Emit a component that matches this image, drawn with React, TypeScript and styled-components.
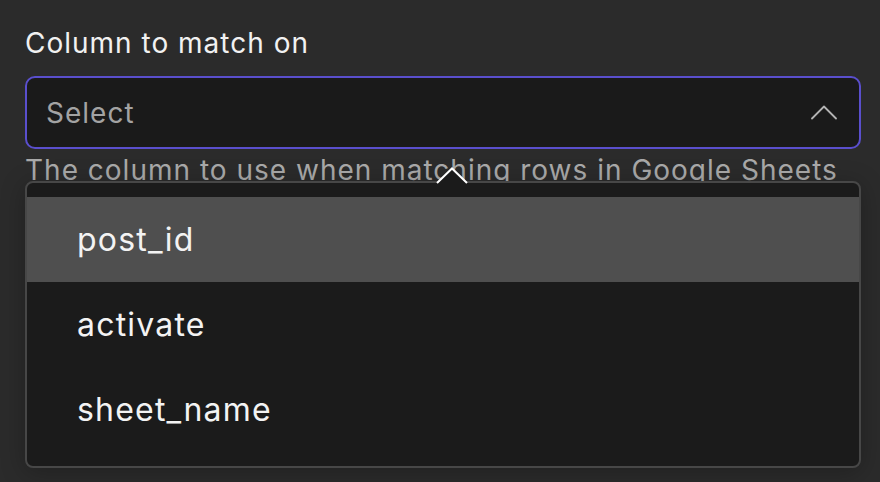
import React from "react";
import styled, { createGlobalStyle } from "styled-components";

const Global = createGlobalStyle`
  html, body {
    margin: 0;
    padding: 0;
    background: #2b2b2b;
    font-family: Inter, "Noto Sans", sans-serif;
    -webkit-font-smoothing: antialiased;
  }
`;

const Page = styled.div`
  width: 880px;
  height: 482px;
  box-sizing: border-box;
  padding: 26px 19px 0 25px;
  overflow: hidden;
`;

const Field = styled.div`
  display: flex;
  flex-direction: column;
`;

const Label = styled.label`
  font-size: 28px;
  line-height: 34px;
  letter-spacing: 1px;
  color: #f1f1f1;
  font-weight: 400;
`;

const SelectWrap = styled.div`
  position: relative;
  margin-top: 16px;
`;

const SelectBox = styled.div`
  box-sizing: border-box;
  height: 73px;
  display: flex;
  align-items: center;
  justify-content: space-between;
  padding: 0 22px 0 19px;
  background: #1a1a1a;
  border: 2px solid #5a4fcd;
  border-radius: 10px;
`;

const Placeholder = styled.span`
  font-size: 28px;
  letter-spacing: 1px;
  color: #a3a3a3;
`;

const Helper = styled.div`
  margin-top: 4px;
  font-size: 28px;
  line-height: 34px;
  letter-spacing: 1px;
  color: #a9a9a9;
  white-space: nowrap;
`;

const Popover = styled.div`
  position: absolute;
  top: 105px;
  left: 0;
  right: 0;
  height: 287px;
  box-sizing: border-box;
  background: #1b1b1b;
  border: 2px solid #474747;
  border-radius: 8px;
  padding: 14px 0;
  box-shadow: 0 4px 24px rgba(0, 0, 0, 0.25);
`;

const Arrow = styled.svg`
  position: absolute;
  top: -17px;
  left: 409px;
`;

const List = styled.ul`
  list-style: none;
  margin: 0;
  padding: 0;
`;

const Item = styled.li<{ $active?: boolean }>`
  height: 85px;
  display: flex;
  align-items: center;
  padding-left: 50px;
  font-size: 32px;
  letter-spacing: 1.2px;
  color: #f3f3f3;
  background: ${(p) => (p.$active ? "#4f4f4f" : "transparent")};
`;

const ChevronUp = () => (
  <svg width="26" height="15" viewBox="0 0 26 15" fill="none">
    <path d="M1 13.5 L13 1.5 L25 13.5" stroke="#b4b4b4" strokeWidth="1.8" strokeLinecap="round" strokeLinejoin="round" />
  </svg>
);

const options = ["post_id", "activate", "sheet_name"];

export default function App() {
  return (
    <Page>
      <Global />
      <Field>
        <Label>Column to match on</Label>
        <SelectWrap>
          <SelectBox>
            <Placeholder>Select</Placeholder>
            <ChevronUp />
          </SelectBox>
          <Helper>The column to use when matching rows in Google Sheets</Helper>
          <Popover>
            <Arrow width="32" height="18" viewBox="0 0 32 18">
              <path d="M1 18 L16 2.5 L31 18 Z" fill="#1b1b1b" />
              <path d="M1 17 L16 2.5 L31 17" stroke="#ffffff" strokeWidth="2" fill="none" strokeLinejoin="miter" />
            </Arrow>
            <List>
              {options.map((o, i) => (
                <Item key={o} $active={i === 0}>
                  {o}
                </Item>
              ))}
            </List>
          </Popover>
        </SelectWrap>
      </Field>
    </Page>
  );
}
